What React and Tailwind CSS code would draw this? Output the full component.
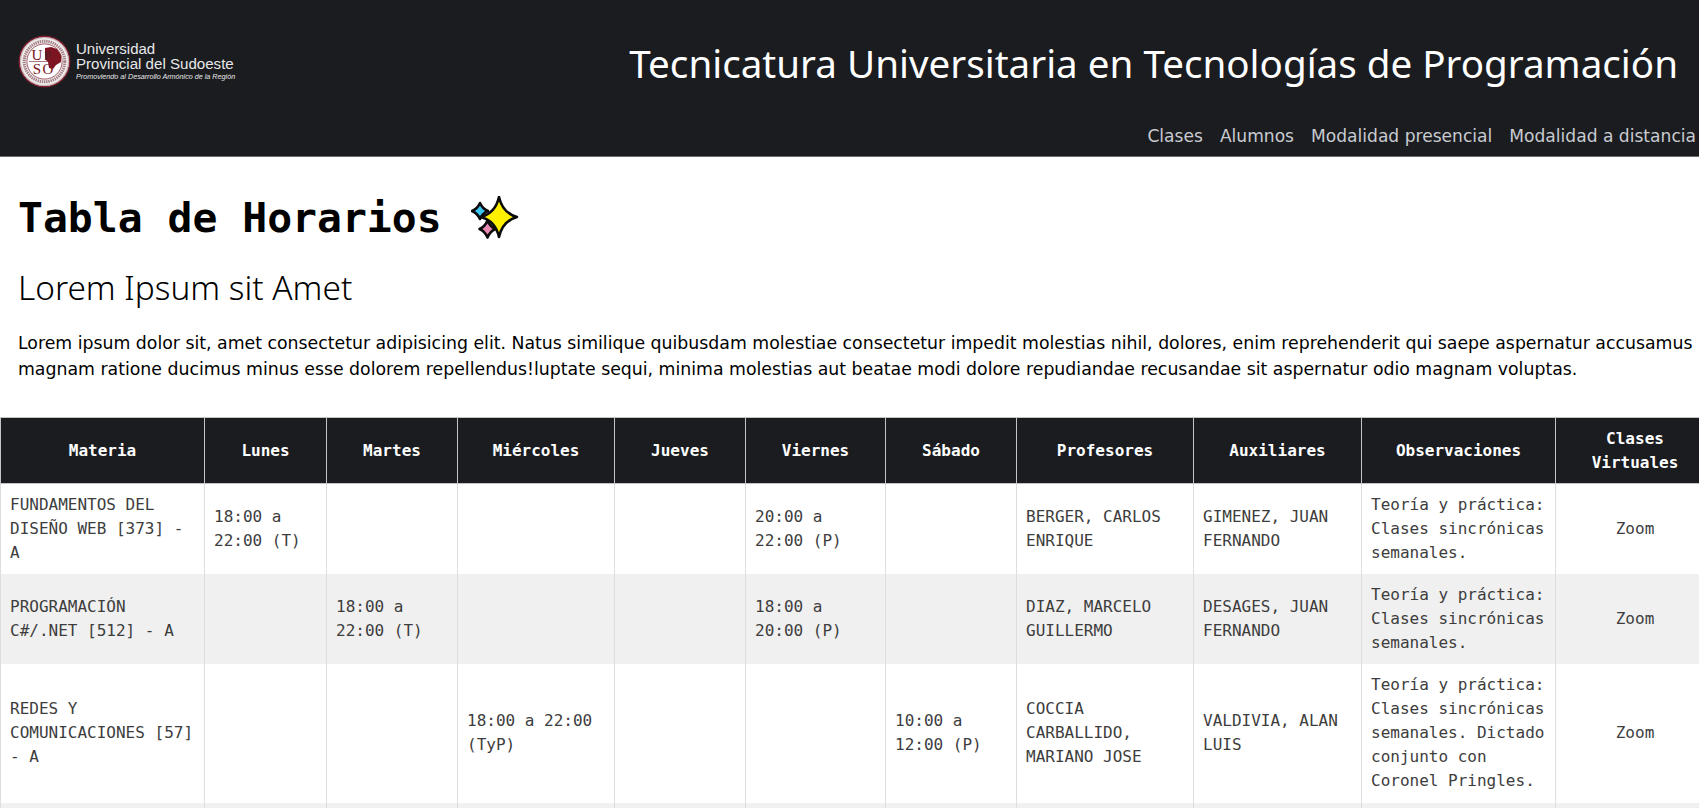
const MONO = "font-['DejaVu_Sans_Mono','Liberation_Mono',monospace]";

function Seal() {
  return (
    <svg width="53" height="53" viewBox="0 0 53 53" className="shrink-0">
      <circle cx="26.5" cy="26.5" r="26" fill="#7d1f2e" />
      <circle cx="26.5" cy="26.5" r="24.6" fill="#f1eeee" />
      <circle cx="26.5" cy="26.5" r="24" fill="none" stroke="#a58a8e" strokeWidth="0.6" />
      <circle cx="26.5" cy="26.5" r="20.3" fill="none" stroke="#8b5a63" strokeWidth="3" strokeDasharray="1.4 0.8" opacity="0.75" />
      <circle cx="26.5" cy="26.5" r="17.6" fill="#ffffff" stroke="#7d1f2e" strokeWidth="0.7" />
      <path d="M27 13 L33 12 L39 14 L43 20 L43 27 L38 30 L35 34 L31 33 L30 27 L27 24 Z" fill="#7d1422" />
      <line x1="11" y1="26.5" x2="30" y2="26.5" stroke="#7d1f2e" strokeWidth="0.6" />
      <text x="19" y="25" textAnchor="middle" fontFamily="Liberation Serif, serif" fontSize="15" fill="#7d1422">U</text>
      <text x="29.5" y="25" textAnchor="middle" fontFamily="Liberation Serif, serif" fontSize="13" fill="#4a2328">P</text>
      <text x="19" y="39" textAnchor="middle" fontFamily="Liberation Serif, serif" fontSize="15" fill="#7d1422">S</text>
      <text x="30" y="39" textAnchor="middle" fontFamily="Liberation Serif, serif" fontSize="15" fill="#7d1422">O</text>
    </svg>
  );
}

function Sparkles() {
  const star = (cx, cy, rx, ry, f) => {
    const kx = rx * f;
    const ky = ry * f;
    return `M${cx} ${cy - ry} Q${cx + kx} ${cy - ky} ${cx + rx} ${cy} Q${cx + kx} ${cy + ky} ${cx} ${cy + ry} Q${cx - kx} ${cy + ky} ${cx - rx} ${cy} Q${cx - kx} ${cy - ky} ${cx} ${cy - ry}Z`;
  };
  return (
    <svg width="48" height="44" viewBox="0 0 48 44" className="ml-[29px] shrink-0">
      <g stroke="#0b0b0b" strokeWidth="2.6" strokeLinejoin="round">
        <path d={star(9, 15, 8, 8, 0.3)} fill="#3fc4ee" />
        <path d={star(16.5, 33, 8, 8.5, 0.3)} fill="#ea8ab4" />
        <path d={star(28, 21, 18, 20, 0.2)} fill="#fff000" />
      </g>
    </svg>
  );
}

const HEAD = ["Materia", "Lunes", "Martes", "Miércoles", "Jueves", "Viernes", "Sábado", "Profesores", "Auxiliares", "Observaciones", "Clases Virtuales"];

const ROWS = [
  {
    h: "h-[90px]",
    bg: "bg-white",
    cells: ["FUNDAMENTOS DEL DISEÑO WEB [373] - A", "18:00 a 22:00 (T)", "", "", "", "20:00 a 22:00 (P)", "", "BERGER, CARLOS ENRIQUE", "GIMENEZ, JUAN FERNANDO", "Teoría y práctica: Clases sincrónicas semanales.", "Zoom"],
  },
  {
    h: "h-[90px]",
    bg: "bg-[#f0f0f0]",
    cells: ["PROGRAMACIÓN C#/.NET [512] - A", "", "18:00 a 22:00 (T)", "", "", "18:00 a 20:00 (P)", "", "DIAZ, MARCELO GUILLERMO", "DESAGES, JUAN FERNANDO", "Teoría y práctica: Clases sincrónicas semanales.", "Zoom"],
  },
  {
    h: "h-[139px]",
    bg: "bg-white",
    cells: ["REDES Y COMUNICACIONES [57] - A", "", "", "18:00 a 22:00 (TyP)", "", "", "10:00 a 12:00 (P)", "COCCIA CARBALLIDO, MARIANO JOSE", "VALDIVIA, ALAN LUIS", "Teoría y práctica: Clases sincrónicas semanales. Dictado conjunto con Coronel Pringles.", "Zoom"],
  },
  {
    h: "h-[90px]",
    bg: "bg-[#f0f0f0]",
    cells: ["", "", "", "", "", "", "", "", "", "", ""],
  },
];

export default function App() {
  return (
    <div className="h-[808px] w-[1699px] overflow-hidden bg-white">
      <header className="flex h-[157px] flex-col bg-[#1a1c20] border-b border-[#6b6b6b]">
        <div className="flex h-[122px] items-start justify-between">
          <div className="mt-[35px] ml-[18px] flex items-center gap-[5px]">
            <Seal />
            <div className="font-['Liberation_Sans',sans-serif] text-[#e8e8e8]">
              <div className="pt-[1px] text-[15px] leading-[14px]">Universidad</div>
              <div className="text-[15.1px] leading-[15px] whitespace-nowrap">Provincial del Sudoeste</div>
              <div className="text-[7.2px] leading-[11px] italic whitespace-nowrap">Promoviendo al Desarrollo Armónico de la Región</div>
            </div>
          </div>
          <h1 className="mt-[34px] mr-[21px] font-['Noto_Sans',sans-serif] text-[38.6px] leading-[58px] text-white whitespace-nowrap">
            Tecnicatura Universitaria en Tecnologías de Programación
          </h1>
        </div>
        <nav className="flex justify-end gap-[17px] pr-[3px] pt-[2px] font-['DejaVu_Sans',sans-serif] text-[17.1px] leading-[24px] text-[#c9cbd0]">
          <span>Clases</span>
          <span>Alumnos</span>
          <span>Modalidad presencial</span>
          <span>Modalidad a distancia</span>
        </nav>
      </header>

      <main className="pt-[31px]">
        <h2 className={`flex items-center pl-[18px] h-[60px] text-[41.4px] font-bold text-black whitespace-nowrap ${MONO}`}>
          Tabla de Horarios
          <Sparkles />
        </h2>
        <h3 className="mt-[17px] pl-[18px] font-['Noto_Sans',sans-serif] text-[33.4px] font-light leading-[44px] text-black">Lorem Ipsum sit Amet</h3>
        <p className="mt-[21px] w-[1699px] pl-[18px] font-['DejaVu_Sans',sans-serif] text-[17.32px] leading-[26px] text-black">
          Lorem ipsum dolor sit, amet consectetur adipisicing elit. Natus similique quibusdam molestiae consectetur impedit molestias nihil, dolores, enim reprehenderit qui saepe aspernatur accusamus magnam ratione ducimus minus esse dolorem repellendus!luptate sequi, minima molestias aut beatae modi dolore repudiandae recusandae sit aspernatur odio magnam voluptas.
        </p>

        <table className={`mt-[35px] w-[1714px] table-fixed border-collapse text-[16px] leading-[24px] ${MONO}`}>
          <colgroup>
            <col className="w-[204px]" />
            <col className="w-[122px]" />
            <col className="w-[131px]" />
            <col className="w-[157px]" />
            <col className="w-[131px]" />
            <col className="w-[140px]" />
            <col className="w-[131px]" />
            <col className="w-[177px]" />
            <col className="w-[168px]" />
            <col className="w-[194px]" />
            <col className="w-[159px]" />
          </colgroup>
          <thead>
            <tr className="h-[66px] bg-[#1a1c20]">
              {HEAD.map((t) => (
                <th key={t} className="border border-[#c4c4c4] px-[9px] text-center font-bold text-white">{t}</th>
              ))}
            </tr>
          </thead>
          <tbody>
            {ROWS.map((r, i) => (
              <tr key={i} className={`${r.h} ${r.bg}`}>
                {r.cells.map((c, j) => (
                  <td key={j} className={`border-x border-[#dedede] px-[9px] align-middle text-[#3d3d3d] ${j === 10 ? "text-center" : "text-left"}`}>{c}</td>
                ))}
              </tr>
            ))}
          </tbody>
        </table>
      </main>
    </div>
  );
}
